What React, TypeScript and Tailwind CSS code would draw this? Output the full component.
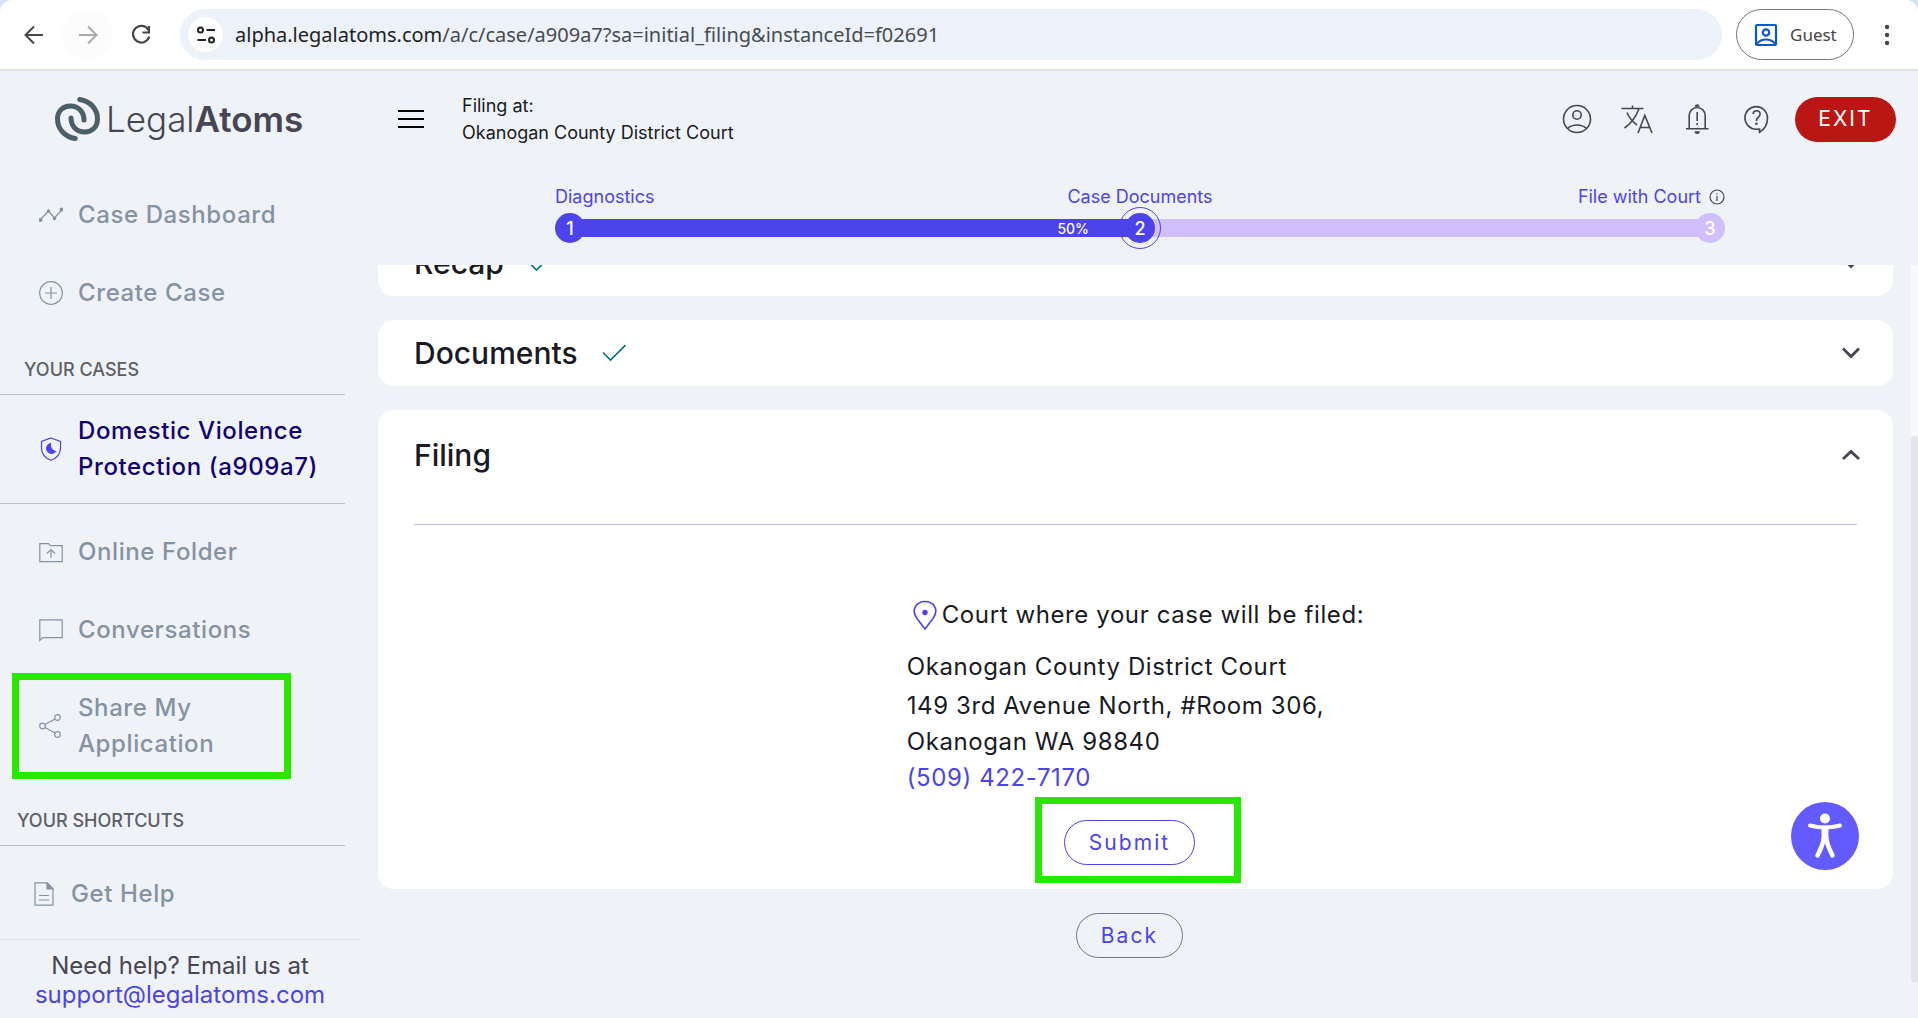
import type { ReactNode } from 'react';

type IconProps = { className?: string; children?: ReactNode; viewBox?: string };

function Svg({ className = '', viewBox = '0 0 24 24', children }: IconProps) {
    return (
        <svg
            viewBox={viewBox}
            fill="none"
            stroke="currentColor"
            strokeWidth="1.2"
            className={`shrink-0 ${className}`}
            aria-hidden="true"
        >
            {children}
        </svg>
    );
}

function BrowserBar() {
    return (
        <div className="bg-[#d3e3fd]">
            <div className="flex h-[71px] items-center rounded-t-xl border-b-2 border-[#e0e2e1] bg-white pr-[19px] pl-2 font-['Noto_Sans',sans-serif]">
                <button aria-label="Back" className="flex size-[51px] items-center justify-center text-[#474747]">
                    <Svg className="size-6">
                        <path d="M21 12H4M12 3.5 3.5 12l8.5 8.5" strokeWidth="2" />
                    </Svg>
                </button>
                <button aria-label="Forward" className="ml-[3px] flex size-[51px] items-center justify-center rounded-full bg-[#fcfcfc] text-[#a9a9a9]">
                    <Svg className="size-6">
                        <path d="M3 12h17M12 3.5 20.5 12 12 20.5" strokeWidth="2" />
                    </Svg>
                </button>
                <button aria-label="Reload" className="ml-0.5 flex size-[51px] items-center justify-center text-[#474747]">
                    <Svg className="size-6">
                        <path d="M19.5 7A8.3 8.3 0 1 0 20.3 13.5" strokeWidth="2.2" />
                        <path d="M20 3v6.5h-6.5" strokeWidth="2.2" />
                    </Svg>
                </button>
                <div className="ml-3.5 flex h-[51px] flex-1 items-center rounded-full bg-[#ecf1fa] pl-2">
                    <button aria-label="View site information" className="flex size-[35px] items-center justify-center rounded-full bg-white text-[#202124]">
                        <Svg className="size-5" viewBox="0 0 20 20">
                            <circle cx="4.5" cy="5" r="2.5" strokeWidth="2" />
                            <circle cx="15.5" cy="15" r="2.5" strokeWidth="2" />
                            <path d="M10.5 5H19M1.5 15H10" strokeWidth="2" />
                        </Svg>
                    </button>
                    <span className="ml-3 text-[20px] text-[#474b50]">
                        <span className="text-[#1f1f1f]">alpha.legalatoms.com</span>
                        /a/c/case/a909a7?sa=initial_filing&amp;instanceId=f02691
                    </span>
                </div>
                <button className="ml-3.5 flex h-[51px] w-[118px] items-center rounded-full border border-[#747775] pl-[17px] text-[17px] text-[#474747]">
                    <Svg className="mr-3 size-6 text-[#0b57d0]">
                        <rect x="2" y="2" width="20" height="20" rx="1" strokeWidth="2.2" />
                        <circle cx="12" cy="9.5" r="3.2" strokeWidth="2.2" />
                        <path d="M3 20.5c2.5-3 5.5-4 9-4s6.5 1 9 4" strokeWidth="2.2" />
                    </Svg>
                    Guest
                </button>
                <button aria-label="Browser menu" className="ml-[21px] flex w-6 justify-center text-[#474747]">
                    <Svg className="size-6">
                        <g fill="currentColor" stroke="none">
                            <circle cx="12" cy="4" r="2.2" />
                            <circle cx="12" cy="12" r="2.2" />
                            <circle cx="12" cy="20" r="2.2" />
                        </g>
                    </Svg>
                </button>
            </div>
        </div>
    );
}

function Logo() {
    return (
        <a href="#home" className="flex h-24 items-center gap-1.5 pl-[55px] text-[#474554]">
            <svg viewBox="0 0 45 44" className="h-11 w-[45px]" fill="none" stroke="#4b5f68" strokeWidth="5" strokeLinecap="round" aria-hidden="true">
                <path d="M24.7 2.5C35 4 42.5 12 42.5 22C42.5 30 37 35 29.5 35C21.5 35 16 29 16 21" />
                <path d="M20.3 41.5C10 40 2.5 32 2.5 22C2.5 14 8 9 15.5 9C23.5 9 29 15 29 23" />
            </svg>
            <span className="text-[35px] leading-none font-light">
                Legal<span className="font-semibold">Atoms</span>
            </span>
        </a>
    );
}

type NavItemProps = { icon: ReactNode; label: ReactNode; active?: boolean; highlight?: boolean };

function NavItem({ icon, label, active, highlight }: NavItemProps) {
    return (
        <a
            href="#section"
            className={`relative flex items-center gap-[15px] py-[21px] pl-[39px] text-[24px] leading-9 font-medium tracking-wide ${active ? 'text-[#130071]' : 'text-[#8592a3]'}`}
        >
            {icon}
            <span>{label}</span>
            {highlight && (
                <span className="absolute inset-y-1 left-3 w-[279px] border-[7px] border-[#27e800]" />
            )}
        </a>
    );
}

function Sidebar() {
    return (
        <aside className="flex w-[360px] shrink-0 flex-col">
            <Logo />
            <nav className="mr-[15px] flex flex-col pt-[9px]">
                <NavItem
                    label="Case Dashboard"
                    icon={
                        <Svg className="size-6">
                            <path d="m1 17 8.5-9 6 7L23 6.5" />
                            <g fill="currentColor" stroke="none">
                                <circle cx="1.5" cy="17" r="2" />
                                <circle cx="9.5" cy="8" r="1.7" />
                                <circle cx="15.5" cy="15.5" r="1.7" />
                                <circle cx="22.5" cy="6.5" r="2" />
                            </g>
                        </Svg>
                    }
                />
                <NavItem
                    label="Create Case"
                    icon={
                        <Svg className="size-6">
                            <circle cx="12" cy="12" r="11.3" />
                            <path d="M12 6v12M6 12h12" />
                        </Svg>
                    }
                />
                <h2 className="border-b border-[#b9c3cf] pt-6 pb-[11px] pl-6 text-[18px] leading-[27px] font-medium text-[#5e5e66]">YOUR CASES</h2>
                <div className="mb-[9px] border-b border-[#b9c3cf]">
                    <div className="-my-[3px]">
                        <NavItem
                            active
                            label={
                                <>
                                    Domestic Violence
                                    <br />
                                    Protection (a909a7)
                                </>
                            }
                            icon={
                                <Svg className="size-6 text-[#4d43ea]">
                                    <path d="M12 1 21.5 4.5V11c0 6-3.5 10-9.5 12.3C6 21 2.5 17 2.5 11V4.5Z" />
                                    <path d="M11.5 6.5c-.8 4.5 1 7 5 8a5 5 0 1 1-5-8Z" fill="currentColor" />
                                </Svg>
                            }
                        />
                    </div>
                </div>
                <NavItem
                    label="Online Folder"
                    icon={
                        <Svg className="size-6">
                            <path d="M.8 3.6h8.7l2 2h11.7v16H.8Z" />
                            <path d="M12 18V9.5m-4 4 4-4 4 4" />
                        </Svg>
                    }
                />
                <NavItem
                    label="Conversations"
                    icon={
                        <Svg className="size-6">
                            <path d="M.8 22.5V1.8h22.4v17.8H3.6Z" />
                        </Svg>
                    }
                />
                <NavItem
                    highlight
                    label={
                        <>
                            Share My
                            <br />
                            Application
                        </>
                    }
                    icon={
                        <Svg className="size-6">
                            <circle cx="3.5" cy="12" r="2.8" />
                            <circle cx="18.5" cy="3.5" r="2.8" />
                            <circle cx="18.5" cy="20.5" r="2.8" />
                            <path d="M6 10.5 16 5M6 13.5l10 5.5" />
                        </Svg>
                    }
                />
                <h2 className="border-b border-[#b9bcc6] pt-6 pb-[11px] pl-[17px] text-[18px] leading-[27px] font-medium text-[#5e5e66]">YOUR SHORTCUTS</h2>
                <div className="-ml-[7px] pt-[9px]">
                    <NavItem
                        label="Get Help"
                        icon={
                            <Svg className="size-6">
                                <path d="M3 .8h12l6 6.2v16.2H3Z" />
                                <path d="M15 .8v6.2h6Z" fill="currentColor" />
                                <path d="M7 13.5h10M7 18h10" />
                            </Svg>
                        }
                    />
                </div>
            </nav>
            <div className="mt-1.5 border-t border-[#dfe3e9] pt-[11px] text-center text-[24px] leading-[29px] text-[#474554]">
                Need help? Email us at
                <br />
                <a href="mailto:support@legalatoms.com" className="text-[#4d43ea]">support@legalatoms.com</a>
            </div>
        </aside>
    );
}

function TopBar() {
    return (
        <header className="flex h-24 items-center pr-[22px] pl-[38px] text-[#474554]">
            <button aria-label="Toggle menu" className="mr-[38px] text-black">
                <Svg className="h-5 w-[26px]" viewBox="0 0 26 20">
                    <path d="M0 2h26M0 10h26M0 18h26" strokeWidth="2" />
                </Svg>
            </button>
            <p className="flex-1 text-[18px] leading-[27px] text-[#191a23]">
                Filing at:
                <br />
                Okanogan County District Court
            </p>
            <div className="flex items-center gap-7">
                <button aria-label="Account">
                    <Svg className="size-8" viewBox="0 0 32 32">
                        <circle cx="16" cy="16" r="13.5" strokeWidth="1.6" />
                        <circle cx="16" cy="12" r="4.2" strokeWidth="1.6" />
                        <path d="M6.5 25.5c2.5-2.2 5.5-3.5 9.5-3.5s7 1.3 9.5 3.5" strokeWidth="1.6" />
                    </Svg>
                </button>
                <button aria-label="Language">
                    <Svg className="size-8" viewBox="0 0 32 32">
                        <path d="M.5 5.5h22M11.5 2.5v3M18 5.5C15 14 10 20.5 3.5 25M6 9.5c2 5 5.5 9 10 12.5M17 30l6.8-17.5L31 30M19.5 24.5h9" strokeWidth="1.6" />
                    </Svg>
                </button>
                <button aria-label="Notifications">
                    <Svg className="size-8" viewBox="0 0 32 32">
                        <path d="M5 25.7h22.5M8.2 25.5V12.5a8 8 0 0 1 16 0v13M16.2 9v9M16.2 20v2" strokeWidth="1.6" />
                        <path d="M13.7 3.8a2.5 2.5 0 0 1 5 0ZM13.5 28.2h5.4a2.7 2.7 0 0 1-5.4 0Z" fill="currentColor" stroke="none" />
                    </Svg>
                </button>
                <button aria-label="Help">
                    <Svg className="size-8" viewBox="0 0 32 32">
                        <path d="M18.5 26v3.2c5-3 8-8 8-14.2a11.3 11.3 0 1 0-11.3 11.2Z" strokeWidth="1.6" />
                        <path d="M12 11c.3-2.2 1.7-3.2 3.5-3.2 2 0 3.6 1.3 3.6 3.2 0 3-3.7 3.3-3.7 7" strokeWidth="1.6" />
                        <circle cx="15.4" cy="20.8" r="1.3" fill="currentColor" stroke="none" />
                    </Svg>
                </button>
                <button className="-ml-1.5 h-[45px] w-[101px] rounded-full bg-[#ba1613] text-[21px] tracking-widest text-white">
                    EXIT
                </button>
            </div>
        </header>
    );
}

function StepDot({ n, pending }: { n: number; pending?: boolean }) {
    return (
        <span className={`flex size-[30px] shrink-0 items-center justify-center rounded-full text-[18px] font-medium text-white ${pending ? 'bg-[#d0bffc]' : 'bg-[#4d43ea]'}`}>
            {n}
        </span>
    );
}

function Progress() {
    return (
        <div className="mr-[193px] ml-[195px] h-[98px] pt-4">
            <div className="grid grid-cols-3 text-[18px] leading-[27px] text-[#4d43ea]">
                <span>Diagnostics</span>
                <span className="text-center">Case Documents</span>
                <span className="flex items-center justify-end gap-2">
                    File with Court
                    <Svg className="size-4 text-[#474554]" viewBox="0 0 16 16">
                        <circle cx="8" cy="8" r="7" />
                        <path d="M8 7v5M8 4.2v1.4" />
                    </Svg>
                </span>
            </div>
            <div className="mt-[3px] flex items-center">
                <StepDot n={1} />
                <div className="-mx-1 flex h-[18px] flex-1 items-center justify-end bg-[#4d43ea]">
                    <span className="pr-10 text-[14px] font-medium text-white">50%</span>
                </div>
                <div className="relative">
                    <StepDot n={2} />
                    <span className="absolute -inset-1.5 rounded-full border border-[#4d43ea]" />
                </div>
                <div className="-mx-1 h-[18px] flex-1 bg-[#d0bffc]" />
                <StepDot n={3} pending />
            </div>
        </div>
    );
}

function CardHeader({ title, done, open }: { title: string; done?: boolean; open?: boolean }) {
    return (
        <div className="flex h-[66px] items-center">
            <h3 className="text-[30px] leading-9 font-medium text-[#191a23]">{title}</h3>
            {done && (
                <Svg className="ml-6 size-6 text-[#00717a]">
                    <path d="m1 11.5 7.5 7.5L23.5 4" strokeWidth="1.6" />
                </Svg>
            )}
            <button aria-label={`Toggle ${title}`} aria-expanded={!!open} className="ml-auto -mr-1.5 text-[#474554]">
                <Svg className="size-6">
                    <path d={open ? 'm4 16 8-7.5 8 7.5' : 'm4 7.5 8 8 8-8'} strokeWidth="2.8" />
                </Svg>
            </button>
        </div>
    );
}

function Filing() {
    return (
        <section className="rounded-2xl bg-white px-9 pt-3 pb-6">
            <CardHeader title="Filing" open />
            <div className="mt-9 flex flex-col items-center border-t border-[#b9c3cf] pt-[72px]">
                <div className="text-[24px] leading-9 tracking-wide text-[#191a23]">
                    <p className="flex items-center gap-1 pl-[5px]">
                        <Svg className="h-[30px] w-[26px] text-[#4d43ea]" viewBox="0 0 26 30">
                            <path d="M13 29 5 18.5C-1.5 9.5 4.5 1.5 13 1.5s14.5 8 8 17Z" strokeWidth="1.6" />
                            <circle cx="13" cy="12.5" r="2.7" fill="currentColor" stroke="none" />
                        </Svg>
                        Court where your case will be filed:
                    </p>
                    <p className="mt-4">Okanogan County District Court</p>
                    <p className="mt-[3px]">
                        149 3rd Avenue North, #Room 306,
                        <br />
                        Okanogan WA 98840
                    </p>
                    <a href="tel:5094227170" className="block text-[#4d43ea]">(509) 422-7170</a>
                </div>
                <div className="relative mt-6 mr-3">
                    <button className="h-[45px] w-[131px] rounded-full border border-[#4d43ea] text-[21px] tracking-widest text-[#4d43ea]">
                        Submit
                    </button>
                    <span className="absolute -top-[23px] -right-[46px] -bottom-[18px] -left-[29px] border-[7px] border-[#27e800]" />
                </div>
            </div>
        </section>
    );
}

export default function App() {
    return (
        <div className="relative flex h-screen flex-col overflow-hidden bg-[#eff3f8] font-['Inter',sans-serif]">
            <BrowserBar />
            <div className="flex min-h-0 flex-1">
                <Sidebar />
                <div className="flex min-w-0 flex-1 flex-col">
                    <TopBar />
                    <Progress />
                    <div className="flex min-h-0 flex-1">
                        <main className="flex-1 overflow-hidden px-[18px]">
                            {/* the list is scrolled part-way, so the first card sits under the progress bar */}
                            <div className="-mt-[35px] flex flex-col gap-6">
                                <section className="rounded-2xl bg-white px-9">
                                    <CardHeader title="Recap" done />
                                </section>
                                <section className="rounded-2xl bg-white px-9">
                                    <CardHeader title="Documents" done />
                                </section>
                                <Filing />
                                <button className="mr-3 h-[45px] w-[107px] self-center rounded-full border border-[#74758a] text-[21px] tracking-widest text-[#4d43ea]">
                                    Back
                                </button>
                            </div>
                        </main>
                        <div className="mb-[35px] w-[7px] bg-[#f8f9fb] pt-[171px]">
                            <div className="h-full rounded-full bg-[#e1e5ec]" />
                        </div>
                    </div>
                </div>
            </div>
            <button aria-label="Accessibility options" className="absolute right-[59px] bottom-[148px] flex size-[68px] items-center justify-center rounded-full bg-[#635bff] text-white">
                <svg viewBox="0 0 36 46" className="h-[46px] w-9" fill="none" stroke="currentColor" strokeLinecap="round" strokeLinejoin="round" aria-hidden="true">
                    <circle cx="18" cy="5.5" r="5" fill="currentColor" stroke="none" />
                    <path d="M3 12.5c10 2.7 20 2.7 30 0" strokeWidth="4" />
                    <path d="M18 16v10" strokeWidth="7" />
                    <path d="M16.5 26c-.5 6-3.5 11-6 16.500M19.5 26c.5 6 3.5 11 6 16.500" strokeWidth="4.5" />
                </svg>
            </button>
        </div>
    );
}
